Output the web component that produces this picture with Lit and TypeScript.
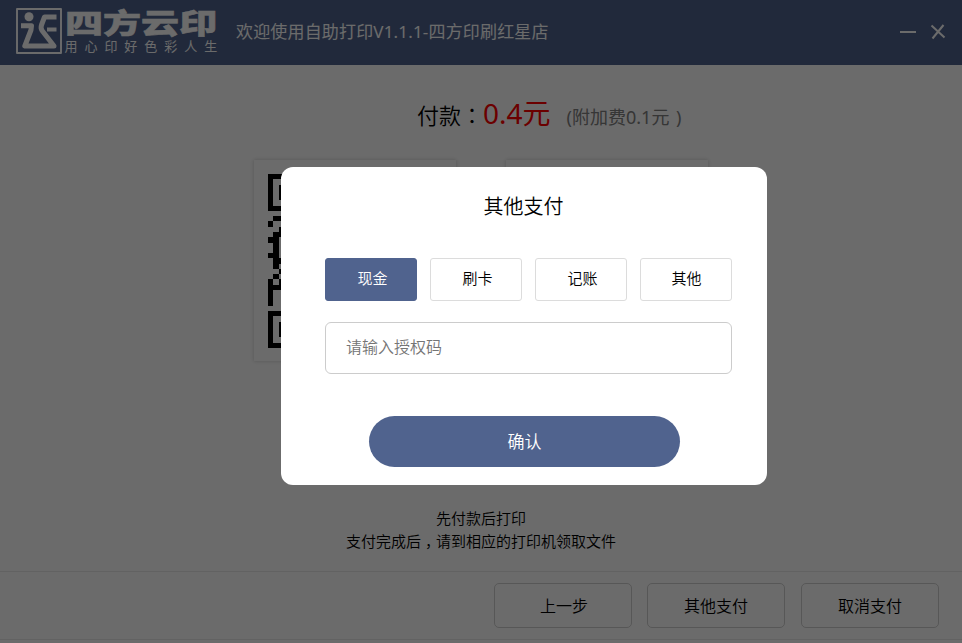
import { LitElement, html, css, svg } from "lit";
import { customElement, property, state } from "lit/decorators.js";
import { classMap } from "lit/directives/class-map.js";

const FONT = css`"Noto Sans", "Noto Sans CJK SC", sans-serif`;

@customElement("brand-logo")
export class BrandLogo extends LitElement {
  static styles = css`
    :host { display: block; width: 204px; height: 48px; }
    svg { display: block; overflow: visible; }
    .fill { fill: #fff; }
    .line { fill: none; stroke: #fff; stroke-linejoin: round; }
    text { fill: #fff; font-family: "Noto Sans CJK SC", sans-serif; }
    .name { font-weight: 900; font-size: 28px; stroke: #fff; stroke-width: 0.5; }
    .slogan { font-size: 13px; font-weight: 400; }
  `;
  render() {
    return html`<svg width="204" height="48" viewBox="0 0 204 48">
      <rect class="line" x="1" y="1" width="44" height="44" stroke-width="1.9" />
      <circle class="fill" cx="13" cy="8.8" r="4.500" />
      <path class="line" stroke-width="5" d="M5 17.800H15.500L15 22L8.800 38H38L26 22.500Q24.500 20 25.500 17L28.500 9H40.500" />
      <path class="line" stroke-width="4" d="M31 21.500H40.500" />
      <text class="name" transform="translate(49 26) scale(1.36 1.02)">四方云印</text>
      ${[..."用心印好色彩人生"].map((c, i) => svg`<text class="slogan" x=${48.5 + i * 19.95} y="43">${c}</text>`)}
    </svg>`;
  }
}

@customElement("title-bar")
export class TitleBar extends LitElement {
  @property() heading = "";
  static styles = css`
    :host { display: flex; box-sizing: border-box; height: 65px; background: #50638e; color: #fff; padding: 8px 16px 0; font: 400 17px/48px ${FONT}; }
    .heading { margin-left: 16px; flex: 1; white-space: nowrap; letter-spacing: 0.17px; }
    .controls { display: block; margin: 14px 0 0; }
    .controls path { fill: none; stroke: #fff; }
  `;
  render() {
    return html`<brand-logo></brand-logo>
      <div class="heading">${this.heading}</div>
      <svg class="controls" width="46" height="20" viewBox="0 0 46 20">
        <path stroke-width="2" d="M0 10H16" />
        <path stroke-width="2" d="M31.500 3.500L44.500 15.500M43.500 3L32.500 16.500" />
      </svg>`;
  }
}

const QR_LEFT = [
  "111", "100", "101", "101", "101", "100", "111", "000", "011", "100", "001",
  "011", "110", "010", "010", "110", "011", "010", "001", "010", "101", "111",
  "100", "100", "100", "000", "111", "100", "101", "101", "101", "100", "111",
];

@customElement("pay-card")
export class PayCard extends LitElement {
  @property({ type: Boolean }) code = false;
  static styles = css`
    :host { display: block; box-sizing: border-box; width: 202px; height: 201px; padding: 14px; background: #fff; box-shadow: 0 0 4px rgba(0, 0, 0, 0.2); }
    svg { display: block; }
  `;
  render() {
    return this.code
      ? html`<svg width="174" height="174" viewBox="0 0 33 33" shape-rendering="crispEdges">
          ${QR_LEFT.flatMap((row, y) => [...row].map((v, x) => (v === "1" ? svg`<rect x=${x} y=${y} width="1" height="1" />` : null)))}
        </svg>`
      : null;
  }
}

@customElement("pay-dialog")
export class PayDialog extends LitElement {
  @state() private method = "现金";
  static styles = css`
    :host { display: block; box-sizing: border-box; width: 486px; height: 318px; background: #fff; border-radius: 12px; padding: 25px 35px 0 44px; color: #000; font: 350 15px/30px ${FONT}; }
    .title { font-size: 20px; text-align: center; padding-right: 10px; }
    .methods { display: grid; grid-template-columns: repeat(4, 92px); gap: 13px; margin-top: 36px; }
    button { font: inherit; color: inherit; padding: 0; background: none; }
    .method { height: 43px; border: 1px solid #dcdcdc; border-radius: 3px; padding: 0 0 4px 3px; }
    .method:last-child { padding-left: 1px; }
    .method.active { background: #50638e; border-color: #50638e; color: #fff; }
    .code { display: block; box-sizing: border-box; width: 407px; height: 52px; margin-top: 21px; padding: 0 20px 2px; border: 1px solid #ccc; border-radius: 6px; font: 350 16px ${FONT}; outline: none; }
    .code::placeholder { color: #757575; opacity: 1; }
    .confirm { display: block; width: 311px; height: 51px; margin: 42px 0 0 44px; border: 0; border-radius: 26px; background: #50638e; color: #fff; font-size: 17px; }
  `;
  render() {
    return html`<div class="title">其他支付</div>
      <div class="methods">
        ${["现金", "刷卡", "记账", "其他"].map(
          (m) => html`<button class=${classMap({ method: true, active: m === this.method })} @click=${() => (this.method = m)}>${m}</button>`
        )}
      </div>
      <input class="code" placeholder="请输入授权码" />
      <button class="confirm">确认</button>`;
  }
}

@customElement("app-root")
export class AppRoot extends LitElement {
  static styles = css`
    :host { display: flex; flex-direction: column; position: relative; width: 962px; height: 643px; overflow: hidden; background: #fff; color: #000; font: 350 15px/23px ${FONT}; }
    .amount { display: flex; align-items: baseline; height: 62px; margin: 26px 0 0 417px; white-space: nowrap; font-size: 22px; line-height: 44px; }
    .colon { font-family: "Noto Sans CJK TC", sans-serif; }
    .sum { color: #f00; font-size: 28px; font-weight: 400; }
    .extra { color: #808080; font-size: 18px; font-weight: 400; margin-left: 16px; word-spacing: 2px; }
    .cards { display: flex; gap: 50px; margin: 7px 0 0 254px; }
    .tips { margin-top: 146px; text-align: center; }
    .comma { display: inline-block; width: 15px; text-indent: 4px; white-space: nowrap; }
    .footer { display: flex; box-sizing: border-box; height: 69px; margin-top: auto; border-top: 1px solid #eaeaea; border-bottom: 1px solid #eaeaea; margin-bottom: 3px; padding: 11px 23px 0 0; justify-content: flex-end; gap: 16px; }
    .footer button { width: 138px; height: 45px; box-sizing: border-box; border: 1px solid #d0d0d0; border-radius: 5px; background: none; color: #000; font: 350 16px ${FONT}; padding: 0 0 1px; }
    .footer button:first-child { margin-right: -1px; padding-left: 2px; }
    .overlay { position: absolute; inset: 0; background: rgba(0, 0, 0, 0.58); padding: 167px 0 0 281px; }
  `;
  render() {
    return html`<title-bar heading="欢迎使用自助打印V1.1.1-四方印刷红星店"></title-bar>
      <div class="amount">
        <span>付款</span><span class="colon">：</span><span class="sum">0.4元</span><span class="extra">(附加费0.1元 )</span>
      </div>
      <div class="cards"><pay-card code></pay-card><pay-card></pay-card></div>
      <div class="tips">
        <div>先付款后打印</div>
        <div>支付完成后<span class="comma">，</span>请到相应的打印机领取文件</div>
      </div>
      <div class="footer"><button>上一步</button><button>其他支付</button><button>取消支付</button></div>
      <div class="overlay"><pay-dialog></pay-dialog></div>`;
  }
}
